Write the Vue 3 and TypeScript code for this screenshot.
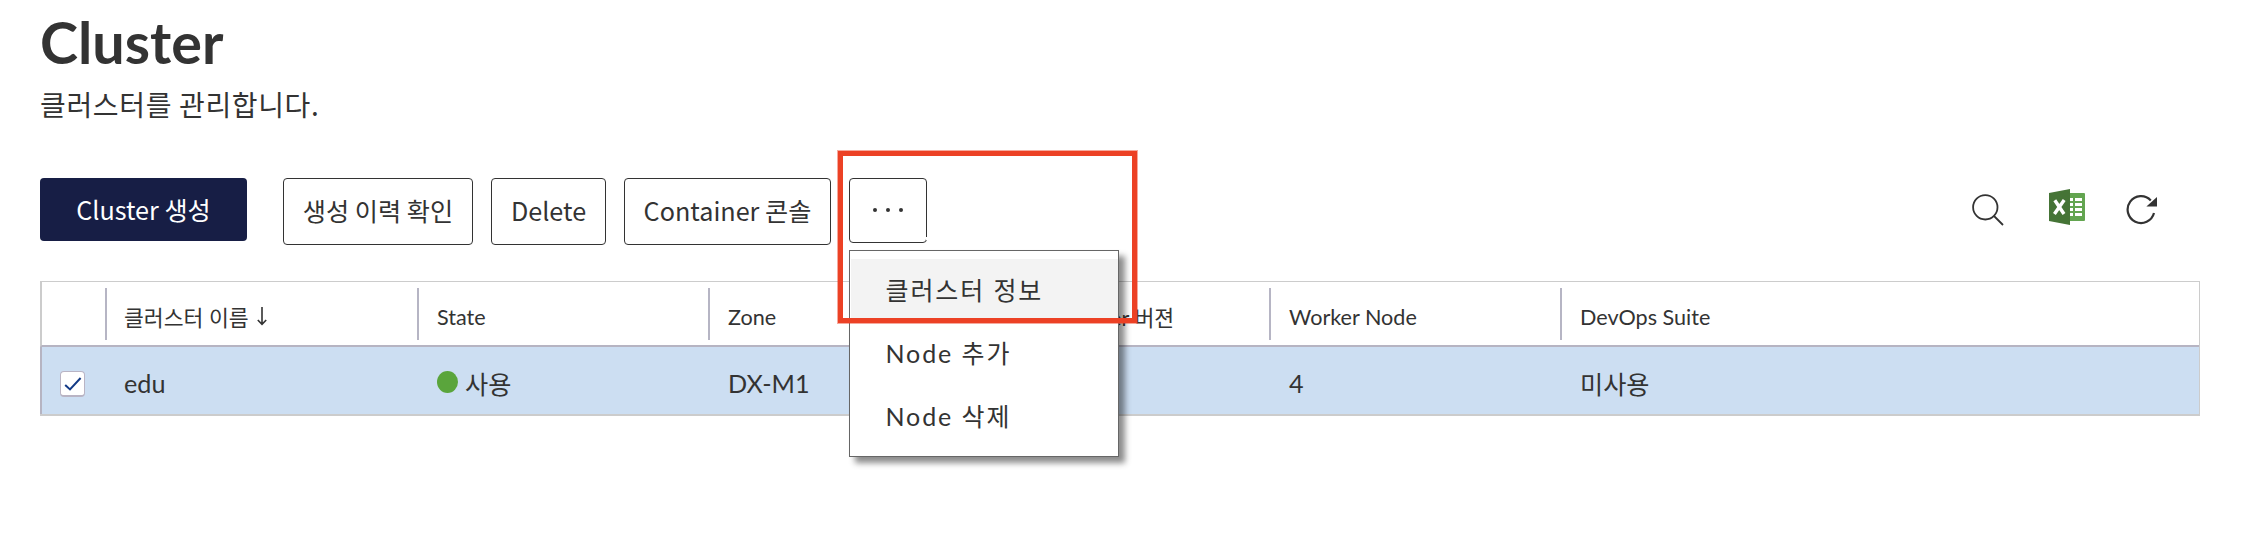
<script setup lang="ts">
interface Column {
  key: string
  label: string
  sort?: boolean
}

const actions = [
  { id: 'history', label: '생성 이력 확인' },
  { id: 'delete', label: 'Delete' },
  { id: 'console', label: 'Container 콘솔' },
]

const menuItems = ['클러스터 정보', 'Node 추가', 'Node 삭제']

const columns: Column[] = [
  { key: 'name', label: '클러스터 이름', sort: true },
  { key: 'state', label: 'State' },
  { key: 'zone', label: 'Zone' },
  { key: 'version', label: 'Container 버젼' },
  { key: 'workers', label: 'Worker Node' },
  { key: 'suite', label: 'DevOps Suite' },
]

const row: Record<string, string> = {
  name: 'edu',
  state: '사용',
  zone: 'DX-M1',
  version: '',
  workers: '4',
  suite: '미사용',
}
</script>

<template>
  <main class="page">
    <h1 class="title">Cluster</h1>
    <p class="subtitle">클러스터를 관리합니다.</p>

    <div class="toolbar">
      <button class="btn primary">Cluster 생성</button>
      <button v-for="a in actions" :key="a.id" class="btn outline" :class="a.id">{{ a.label }}</button>
      <div class="more-wrap">
        <button class="more" aria-label="more"><i></i><i></i><i></i></button>
        <ul class="menu">
          <li v-for="(m, i) in menuItems" :key="m" :class="{ active: i === 0 }">{{ m }}</li>
        </ul>
        <div class="highlight"></div>
      </div>
      <div class="tools">
        <svg class="search" width="32" height="32" viewBox="0 0 32 32">
          <circle cx="13.3" cy="13.3" r="12.2" />
          <path d="M22 22 L31 31" />
        </svg>
        <svg class="excel" width="36" height="36" viewBox="0 0 36 36">
          <rect x="18" y="4" width="18" height="28" rx="1" fill="#63a550" />
          <path
            fill="#fff"
            d="M21 9h3v3H21zM26 9h7v3h-7zM21 14h3v3H21zM26 14h7v3h-7zM21 19h3v3H21zM26 19h7v3h-7zM21 24h3v3H21zM26 24h7v3h-7z"
          />
          <path fill="#457436" d="M0 4 L21 0 V36 L0 32 Z" />
          <path d="M5.8 11.2 L15 25 M15.2 11 L5.4 25" stroke="#fff" stroke-width="3.4" fill="none" />
        </svg>
        <svg class="refresh" width="32" height="32" viewBox="0 0 32 32">
          <path class="arc" d="M28 19 A13.4 13.4 0 1 1 24.8 6.4" />
          <path class="head" d="M31 3 V12.4 H20.4 Z" />
        </svg>
      </div>
    </div>

    <section class="table">
      <div class="grid head-row">
        <div class="cell"></div>
        <div v-for="c in columns" :key="c.key" class="cell sep" :class="c.key">
          <span>{{ c.label }}</span>
          <svg v-if="c.sort" class="sort" width="10" height="19" viewBox="0 0 10 19">
            <path d="M5 0 V17 M0.8 13 L5 17.4 L9.2 13" />
          </svg>
        </div>
      </div>
      <div class="grid body-row">
        <div class="cell check-cell">
          <span class="checkbox">
            <svg width="18" height="14" viewBox="0 0 18 14"><path d="M1.2 8 L6 12.4 L16.6 1" /></svg>
          </span>
        </div>
        <div v-for="c in columns" :key="c.key" class="cell" :class="c.key">
          <i v-if="c.key === 'state'" class="dot"></i>
          <span>{{ row[c.key] }}</span>
        </div>
      </div>
    </section>
  </main>
</template>

<style>
body {
  background: #fff;
}
</style>

<style scoped>
.page {
  box-sizing: border-box;
  width: 2264px;
  height: 544px;
  padding: 10px 64px 0 40px;
  background: #fff;
  color: #333;
  font-family: Lato, 'Noto Sans CJK KR', sans-serif;
  overflow: hidden;
}
.title {
  margin: 0;
  font-size: 57.5px;
  line-height: 64px;
  font-weight: 700;
}
.subtitle {
  margin: 10px 0 54px;
  font: 400 28px/40px 'Noto Sans CJK KR', sans-serif;
  letter-spacing: 0.65px;
}
.toolbar {
  display: flex;
  align-items: flex-start;
  height: 67px;
}
.btn {
  box-sizing: border-box;
  padding: 0;
  border-radius: 4px;
  font: 400 25.2px/36px 'Noto Sans CJK KR', sans-serif;
  white-space: nowrap;
}
.primary {
  width: 207px;
  height: 63px;
  margin-right: 36px;
  padding-bottom: 1px;
  border: 0;
  background: #171e45;
  color: #fff;
}
.outline {
  height: 67px;
  margin-right: 18px;
  padding-bottom: 3px;
  border: 1px solid #333;
  background: #fff;
  color: #333;
}
.history {
  width: 190px;
}
.delete {
  width: 115px;
}
.console {
  width: 207px;
}
.more-wrap {
  position: relative;
}
.more {
  position: relative;
  display: flex;
  align-items: center;
  justify-content: center;
  gap: 9px;
  box-sizing: border-box;
  width: 78px;
  height: 65px;
  padding: 0 0 2px;
  border: 1px solid #333;
  border-radius: 4px;
  background: #fff;
}
.more::after {
  content: '';
  position: absolute;
  right: -1px;
  bottom: 2px;
  width: 1px;
  height: 3px;
  background: #fff;
}
.more i {
  width: 4px;
  height: 4px;
  border-radius: 50%;
  background: #333;
}
.menu {
  position: absolute;
  z-index: 2;
  left: 0;
  top: 72px;
  box-sizing: border-box;
  width: 270px;
  height: 207px;
  margin: 0;
  padding: 8px 0 8px 1px;
  list-style: none;
  border: 1px solid #666;
  background: #fff;
  box-shadow: 6px 6px 6px rgba(0, 0, 0, 0.45);
}
.menu li {
  height: 63px;
  padding-left: 34.5px;
  font-size: 25px;
  line-height: 63px;
  letter-spacing: 1.9px;
}
.menu .active {
  background: #f3f3f3;
}
.highlight {
  position: absolute;
  z-index: 3;
  left: -11px;
  top: -27px;
  box-sizing: border-box;
  width: 299px;
  height: 172px;
  border: 5px solid #ec4125;
  outline: 1px solid rgba(236, 65, 37, 0.45);
}
.tools {
  display: flex;
  margin-left: auto;
  padding: 11px 42px 0 0;
}
.search {
  margin: 5px 45px 0 0;
  fill: none;
  stroke: #333;
  stroke-width: 1.8;
}
.excel {
  margin-right: 41px;
}
.refresh {
  margin-top: 5px;
}
.arc {
  fill: none;
  stroke: #333;
  stroke-width: 2.2;
}
.head {
  fill: #333;
}
.table {
  box-sizing: border-box;
  width: 2160px;
  margin-top: 36px;
  border: 1px solid #ccc;
  border-left: 0;
  border-bottom-width: 2px;
}
.grid {
  display: grid;
  grid-template-columns: 63px 312px 291px 308px 253px 291px 1fr;
  border-left: 2px solid #ccc;
}
.cell {
  position: relative;
  display: flex;
  align-items: center;
  box-sizing: border-box;
  padding-left: 20px;
  white-space: nowrap;
}
.cell.name {
  padding-left: 19px;
}
.head-row {
  height: 65px;
  box-sizing: border-box;
  border-bottom: 2px solid #b6b4c2;
  font-size: 21.6px;
}
.head-row .cell {
  padding-top: 6px;
}
.sep::before {
  content: '';
  position: absolute;
  left: 0;
  top: 6px;
  width: 2px;
  height: 52px;
  background: #b6b5c4;
}
.sort {
  margin-left: 8px;
  fill: none;
  stroke: #333;
  stroke-width: 1.6;
}
.body-row {
  height: 67px;
  border-left-color: #b6b4c2;
  background: #ccdef2;
  font-size: 25.2px;
}
.body-row .cell {
  padding-top: 5px;
}
.body-row .check-cell {
  padding: 0 0 0 18px;
}
.checkbox {
  display: flex;
  align-items: center;
  justify-content: center;
  box-sizing: border-box;
  width: 25px;
  height: 26px;
  margin-top: 7px;
  border: 1px solid #b9b4c4;
  border-bottom-width: 2px;
  border-radius: 4px;
  background: #fff;
}
.checkbox path {
  fill: none;
  stroke: #123a86;
  stroke-width: 2;
}
.dot {
  width: 21px;
  height: 22px;
  margin: 0 7px 2px 0;
  border-radius: 50%;
  background: #5aa53c;
}
</style>
